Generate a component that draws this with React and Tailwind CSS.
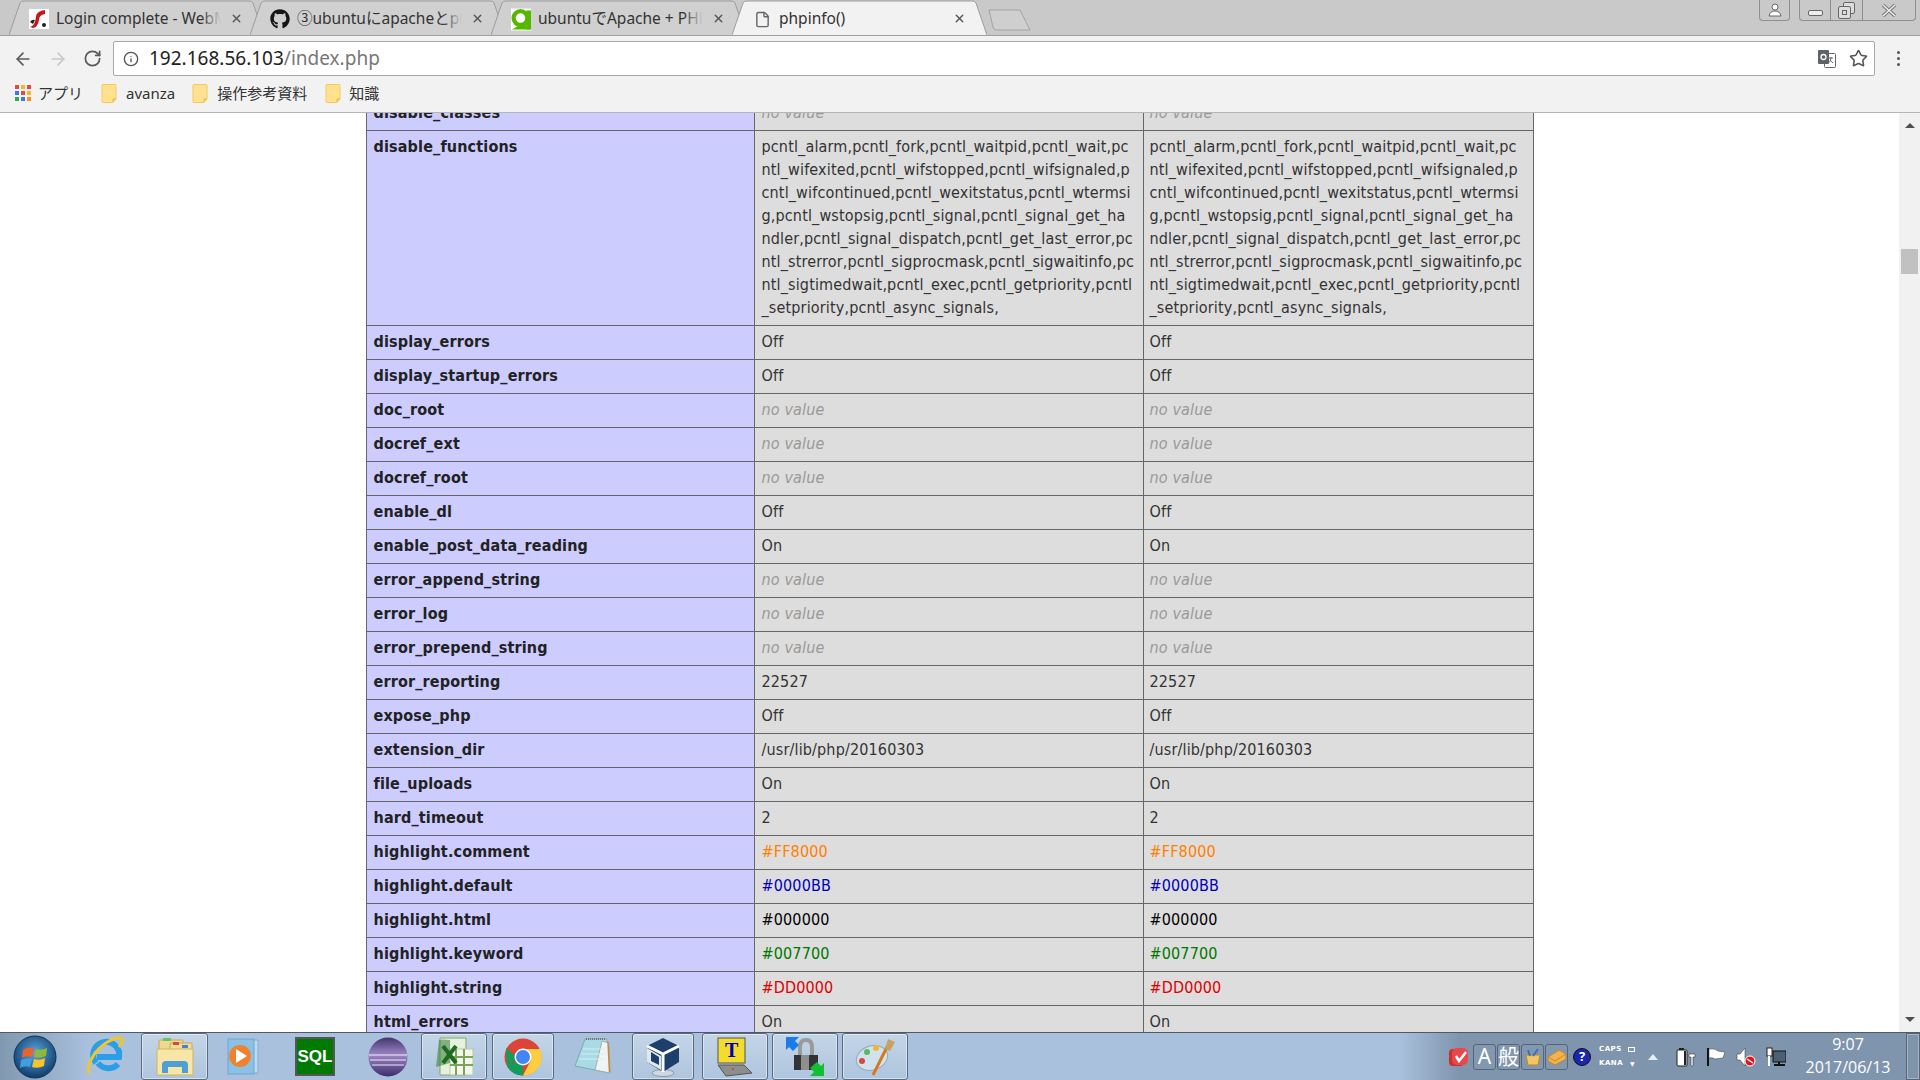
import React from 'react';
import { ArrowLeft, ArrowRight, RotateCw, Info, Star, X, File } from 'lucide-react';
import { FaGithub } from 'react-icons/fa';

const lines = [
  'pcntl_alarm,pcntl_fork,pcntl_waitpid,pcntl_wait,pc',
  'ntl_wifexited,pcntl_wifstopped,pcntl_wifsignaled,p',
  'cntl_wifcontinued,pcntl_wexitstatus,pcntl_wtermsi',
  'g,pcntl_wstopsig,pcntl_signal,pcntl_signal_get_ha',
  'ndler,pcntl_signal_dispatch,pcntl_get_last_error,pc',
  'ntl_strerror,pcntl_sigprocmask,pcntl_sigwaitinfo,pc',
  'ntl_sigtimedwait,pcntl_exec,pcntl_getpriority,pcntl',
  '_setpriority,pcntl_async_signals,',
];

const rows = [
  ['disable_classes', null],
  ['disable_functions', 'lines'],
  ['display_errors', 'Off'],
  ['display_startup_errors', 'Off'],
  ['doc_root', null],
  ['docref_ext', null],
  ['docref_root', null],
  ['enable_dl', 'Off'],
  ['enable_post_data_reading', 'On'],
  ['error_append_string', null],
  ['error_log', null],
  ['error_prepend_string', null],
  ['error_reporting', '22527'],
  ['expose_php', 'Off'],
  ['extension_dir', '/usr/lib/php/20160303'],
  ['file_uploads', 'On'],
  ['hard_timeout', '2'],
  ['highlight.comment', '#FF8000', 'text-[#FF8000]'],
  ['highlight.default', '#0000BB', 'text-[#0000BB]'],
  ['highlight.html', '#000000', 'text-[#000000]'],
  ['highlight.keyword', '#007700', 'text-[#007700]'],
  ['highlight.string', '#DD0000', 'text-[#DD0000]'],
  ['html_errors', 'On'],
];

const ValueCell = ({ row, px }) => {
  const [, value, color] = row;
  return (
    <td className={`border border-[#666] bg-[#ddd] pb-[6px] pt-[4px] pr-[4px] align-top ${px} ${color || 'text-[#333]'}`}>
      {value === null && <i className="text-[#999]">no value</i>}
      {value === 'lines' && lines.map((l) => <div key={l} className="whitespace-nowrap">{l}</div>)}
      {value !== null && value !== 'lines' && value}
    </td>
  );
};

const Tab = ({ active, title, icon, first }) => (
  <div className={`relative h-[35px] w-[255px] shrink-0 ${first ? '' : '-ml-[14px]'} ${active ? 'z-10' : ''}`}>
    <svg className="absolute inset-0" width="255" height="36" viewBox="0 0 255 36">
      <path
        d="M0 35 L11 3 Q12 1 15 1 L240 1 Q243 1 244 3 L255 35"
        fill={active ? '#f2f2f2' : '#d0d0d0'}
        stroke="#9c9c9c"
      />
    </svg>
    <div className="absolute left-[20px] top-[8px] flex h-[22px] items-center">
      <span className="flex w-[20px] justify-center">{icon}</span>
      <span className="relative ml-[7px] w-[165px] overflow-hidden whitespace-nowrap text-[15.5px] text-[#333]">
        {title}
        {!active && <span className="absolute inset-y-0 right-0 w-[20px] bg-gradient-to-r from-transparent to-[#d0d0d0]" />}
      </span>
    </div>
    <X className="absolute right-[21px] top-[12px] text-[#555]" size={13} strokeWidth={2.5} />
  </div>
);

const FolderMark = () => (
  <svg width="16" height="19" viewBox="0 0 16 19" className="shrink-0">
    <path d="M1 1.5 Q1 .5 2 .5 H14 Q15 .5 15 1.5 V15 L12 18.5 H2 Q1 18.5 1 17.5 Z" fill="#ffe18f" stroke="#f3c95e" />
    <path d="M12 18 V15 H15" fill="#f9d068" stroke="#e8b94c" />
  </svg>
);

const AppsGrid = () => {
  const colors = ['#e8483f', '#f7b52c', '#e8483f', '#3b78e7', '#e8483f', '#f7b52c', '#34a853', '#3b78e7', '#f7941d'];
  return (
    <div className="grid h-[16px] w-[16px] grid-cols-3 gap-[2px]">
      {colors.map((c, i) => (
        <span key={i} style={{ backgroundColor: c }} />
      ))}
    </div>
  );
};

const WebmIcon = () => (
  <svg width="20" height="20" viewBox="0 0 20 20">
    <rect width="20" height="20" fill="#fff" />
    <path d="M16 1 Q8 2 7 7 Q7 11 5 15 Q3 18 1 18 L4 19 Q9 18 10 11 Q10 6 16 5 Z" fill="#c8161d" />
    <path d="M1 13 Q3 10 6 11 L4 15 Z" fill="#222" />
    <circle cx="15" cy="16" r="2" fill="#222" />
  </svg>
);

const QiitaIcon = () => (
  <svg width="21" height="23" viewBox="0 0 21 23">
    <rect y="0" width="21" height="23" fill="#fff" />
    <circle cx="10" cy="10" r="9.5" fill="#55b800" />
    <circle cx="10" cy="10" r="5" fill="#fff" />
    <path d="M13 15 L20 22 H1" fill="#55b800" />
    <rect x="16" y="2" width="5" height="20" fill="#55b800" />
  </svg>
);

const WindowControls = () => (
  <div className="absolute right-[4px] top-0 flex items-start">
    <div className="mr-[9px] flex h-[21px] w-[31px] items-center justify-center rounded-b-[4px] border border-t-0 border-[#8f8f8f]">
      <svg width="14" height="14" viewBox="0 0 14 14">
        <circle cx="7" cy="4" r="3" fill="#fff" stroke="#666" />
        <path d="M1 13 Q2 8 7 8 Q12 8 13 13 Z" fill="#fff" stroke="#666" />
      </svg>
    </div>
    <div className="flex h-[21px] items-center rounded-b-[4px] border border-t-0 border-[#8f8f8f]">
      <div className="flex h-full w-[31px] items-center justify-center border-r border-[#8f8f8f]">
        <span className="mt-[5px] h-[6px] w-[15px] rounded-[2px] border border-[#666] bg-[#eee]" />
      </div>
      <div className="flex h-full w-[32px] items-center justify-center border-r border-[#8f8f8f]">
        <svg width="17" height="17" viewBox="0 0 17 17">
          <rect x="5.5" y=".5" width="11" height="11" rx="1.5" fill="#ddd" stroke="#666" />
          <rect x=".5" y="4.5" width="12" height="12" rx="1.5" fill="#ddd" stroke="#666" />
          <rect x="4.5" y="8.5" width="4" height="4" fill="none" stroke="#666" />
        </svg>
      </div>
      <div className="flex h-full w-[52px] items-center justify-center">
        <svg width="16" height="13" viewBox="0 0 16 13">
          <path d="M2 1 L14 12 M14 1 L2 12" stroke="#777" strokeWidth="3.5" />
          <path d="M2 1 L14 12 M14 1 L2 12" stroke="#eee" strokeWidth="1.5" />
        </svg>
      </div>
    </div>
  </div>
);

const TranslateIcon = () => (
  <svg width="18" height="18" viewBox="0 0 18 18">
    <rect x="6.5" y="3.5" width="11" height="14" rx="1" fill="#fff" stroke="#666" />
    <rect x="0" y="0" width="11" height="14" rx="1" fill="#5f6368" />
    <circle cx="5.5" cy="7" r="2.5" fill="none" stroke="#fff" strokeWidth="1.3" />
    <path d="M11 8 H15 M13 7 V8 Q13 12 10 13 M12 10 L15 13" stroke="#666" fill="none" />
  </svg>
);

const OrbIcon = () => (
  <svg width="44" height="44" viewBox="0 0 44 44">
    <defs>
      <radialGradient id="orb" cx="50%" cy="40%" r="60%">
        <stop offset="0%" stopColor="#5fa4d8" />
        <stop offset="100%" stopColor="#0d3c6e" />
      </radialGradient>
    </defs>
    <circle cx="22" cy="22" r="21" fill="url(#orb)" stroke="#16324f" />
    <path d="M10 15 Q15 11 21 14 L19 22 Q14 20 9 23 Z" fill="#e8642c" />
    <path d="M23 14 Q28 16 34 13 L33 21 Q27 24 21 22 Z" fill="#8cbb3c" />
    <path d="M8 25 Q14 22 19 24 L17 32 Q12 30 7 33 Z" fill="#3f9fe0" />
    <path d="M21 24 Q27 26 32 23 L31 31 Q25 34 19 32 Z" fill="#f7c42e" />
  </svg>
);

const IeIcon = () => (
  <svg width="38" height="44" viewBox="0 0 38 44">
    <path d="M9 28 A13 13 0 1 1 32 22 H10 M11 28 A13 13 0 0 0 31 29" fill="none" stroke="#2a9ee6" strokeWidth="6" />
    <path d="M3 38 Q-2 34 8 18 Q22 2 34 3 Q38 5 32 12" fill="none" stroke="#f0c62c" strokeWidth="3" />
  </svg>
);

const ExplorerIcon = () => (
  <svg width="40" height="40" viewBox="0 0 40 40">
    <rect x="4" y="3" width="24" height="14" rx="1" fill="#f0d98e" stroke="#c9a656" />
    <rect x="8" y="1" width="8" height="3" fill="#6ac26a" />
    <rect x="15" y="6" width="22" height="10" rx="1" fill="#f3dc95" stroke="#c9a656" />
    <rect x="18" y="5" width="6" height="3" fill="#d9483b" />
    <rect x="27" y="8" width="6" height="3" fill="#3b86d8" />
    <path d="M2 12 H38 V38 H2 Z" fill="#f7e6a6" stroke="#d3b264" />
    <path d="M7 36 V28 Q7 24 11 24 H29 Q33 24 33 28 V36 H27 V30 H13 V36 Z" fill="#4e9fd6" />
  </svg>
);

const WmpIcon = () => (
  <svg width="36" height="40" viewBox="0 0 36 40">
    <rect x="8" y="3" width="26" height="33" fill="#bcd9ef" stroke="#7fb0d6" />
    <rect x="4" y="2" width="26" height="35" fill="#8cc1e6" stroke="#6fa6cf" />
    <circle cx="16" cy="19" r="11" fill="#f0822d" />
    <path d="M12 12 L23 19 L12 26 Z" fill="#fff" />
  </svg>
);

const EclipseIcon = () => (
  <svg width="40" height="40" viewBox="0 0 40 40">
    <defs>
      <linearGradient id="ecl" x1="0" y1="0" x2="0" y2="1">
        <stop offset="0%" stopColor="#44366f" />
        <stop offset="45%" stopColor="#9c86c4" />
        <stop offset="100%" stopColor="#3d2c6b" />
      </linearGradient>
    </defs>
    <circle cx="20" cy="20" r="19.5" fill="url(#ecl)" />
    <path d="M1 18 H39 M2 23 H38 M4 28 H36" stroke="#efe9f7" strokeWidth="1.2" />
  </svg>
);

const ExcelIcon = () => (
  <svg width="40" height="40" viewBox="0 0 40 40">
    <path d="M6 1 H32 V38 H6 Z" fill="#e6f0dc" stroke="#7ea86b" />
    <rect x="16" y="12" width="23" height="26" fill="#f2f7ea" stroke="#b5c9a5" />
    <path d="M22 12 V38 M30 12 V38 M16 20 H39 M16 28 H39" stroke="#7ba35e" strokeWidth="2" />
    <path d="M5 3 Q8 2 16 3 V26 L2 30 Z" fill="#2f7d31" opacity=".55" />
    <path d="M9 9 L22 26 M22 9 L9 26" stroke="#1e6b22" strokeWidth="4" />
  </svg>
);

const ChromeIcon = () => (
  <svg width="38" height="38" viewBox="0 0 38 38">
    <circle cx="19" cy="19" r="18.5" fill="#db4437" />
    <path d="M19 19 L3 28 A18.5 18.5 0 0 0 19 37.5 Z" fill="#0f9d58" />
    <path d="M2 10 L3 28 L14 20 Z" fill="#0f9d58" />
    <path d="M19 11 H36 A18.5 18.5 0 0 1 19 37.5 L27 22 Z" fill="#ffcd40" />
    <circle cx="19" cy="19" r="8.5" fill="#fff" />
    <circle cx="19" cy="19" r="7" fill="#4285f4" />
  </svg>
);

const NotepadIcon = () => (
  <svg width="40" height="40" viewBox="0 0 40 40">
    <path d="M12 2 H34 L37 36 L2 29 Z" fill="#a8dbe6" stroke="#7fa9b2" />
    <path d="M29 4 L36 6 L37 36 L22 33 Z" fill="#eef4f4" stroke="#aaa" />
    <path d="M10 12 H31 M8 17 H31 M6 22 H30" stroke="#d6eef3" />
    <path d="M13 2 H32" stroke="#777" strokeWidth="2" strokeDasharray="1 1" />
    <path d="M35 5 L36.5 35" stroke="#c08a3a" strokeWidth="1.5" />
  </svg>
);

const VboxIcon = () => (
  <svg width="36" height="40" viewBox="0 0 36 40">
    <ellipse cx="18" cy="36" rx="11" ry="3.5" fill="#cfd8e0" stroke="#8d9aa6" />
    <path d="M18 1 L34 9 V25 L18 35 L2 25 V9 Z" fill="#1d3f6b" />
    <path d="M18 17 L34 9 M18 17 L2 9 M18 17 V35" stroke="#fff" strokeWidth="3" />
    <path d="M2 11 L16 19 V33 L2 25 Z" fill="#dfe7ef" />
    <path d="M6 15 L14 20 V28 L6 24 Z" fill="#1d3f6b" />
  </svg>
);

const TeraIcon = () => (
  <div className="relative h-[40px] w-[38px]">
    <svg className="absolute inset-0" width="38" height="40" viewBox="0 0 38 40">
      <rect x="2" y="1" width="27" height="25" fill="#f4dc2e" stroke="#555" />
      <path d="M2 28 H28 L36 36 L10 39 Z" fill="#8d8d8d" stroke="#555" />
      <circle cx="17" cy="32" r="1" fill="#d33" />
    </svg>
    <span className="absolute left-[9px] top-[3px] font-['Liberation_Serif',serif] text-[20px] font-bold leading-[20px] text-[#0000bb]">T</span>
  </div>
);

const LockIcon = () => (
  <svg width="40" height="40" viewBox="0 0 40 40">
    <path d="M15 19 V10 Q15 3 21 3 Q27 3 27 10 V19" fill="none" stroke="#9a9a9a" strokeWidth="4" />
    <rect x="9" y="18" width="24" height="15" fill="#333" />
    <rect x="16" y="18" width="8" height="15" fill="#8e8e8e" />
    <path d="M1 0 H14 L10 4 L14 8 L8 14 L4 10 L1 13 Z" fill="#1a7bea" />
    <path d="M39 39 H25 L29 35 L25 31 L32 25 L36 29 L39 26 Z" fill="#10c030" />
  </svg>
);

const PaintIcon = () => (
  <svg width="40" height="40" viewBox="0 0 40 40">
    <ellipse cx="17" cy="21" rx="16" ry="12" transform="rotate(-18 17 21)" fill="#cfe2ee" stroke="#92a9b8" />
    <circle cx="7" cy="24" r="3" fill="#d9483b" />
    <circle cx="12" cy="15" r="3" fill="#5cb85c" />
    <circle cx="21" cy="11" r="3" fill="#f2b632" />
    <path d="M18 38 L32 10" stroke="#d9761f" strokeWidth="3" />
    <path d="M30 12 L33 2 L40 5 L35 14 Z" fill="#c9a060" />
  </svg>
);

const TaskItem = ({ w, active, ml, children }) => (
  <div
    className={`flex h-[47px] shrink-0 items-center justify-center ${w} ${ml || ''} ${
      active ? 'rounded-[3px] border border-[#5a6b7f] bg-gradient-to-b from-[#c4d5e7] to-[#aec5de] shadow-[inset_0_0_0_1px_rgba(255,255,255,0.45)]' : ''
    }`}
  >
    {children}
  </div>
);

const LangBox = ({ children }) => (
  <div className="flex h-[26px] w-[23px] items-center justify-center rounded-[3px] border border-[#56667a] bg-[#8397af] text-[21px] leading-none text-white">
    {children}
  </div>
);

const Tray = () => (
  <div className="ml-auto flex h-full items-center">
    <svg width="20" height="20" viewBox="0 0 20 20" className="mr-[2px]">
      <rect x="0" y="2" width="15" height="17" rx="4" fill="#c9302f" />
      <rect x="3" y="1" width="16" height="17" rx="5" fill="#e8484a" />
      <path d="M7 9 L10 14 L17 5" fill="none" stroke="#fff" strokeWidth="2.5" />
    </svg>
    <div className="ml-[2px] flex gap-[1px]">
      <LangBox>A</LangBox>
      <LangBox>般</LangBox>
      <LangBox>
        <svg width="18" height="18" viewBox="0 0 18 18">
          <path d="M2 7 H16 L14 17 H4 Z" fill="#f2c661" stroke="#b98a2e" />
          <path d="M6 8 L4 2 M9 8 L14 1" stroke="#3b6fc4" strokeWidth="2" />
        </svg>
      </LangBox>
      <LangBox>
        <svg width="20" height="18" viewBox="0 0 20 18">
          <path d="M1 9 L12 2 L19 6 V11 L8 17 L1 13 Z" fill="#f2b24f" stroke="#b98a2e" />
          <path d="M1 9 L8 13 L19 6" fill="none" stroke="#c98a2e" />
        </svg>
      </LangBox>
    </div>
    <div className="ml-[5px] flex h-[18px] w-[18px] items-center justify-center rounded-full border border-[#111] bg-[#1a25b0] text-[13px] font-bold leading-none text-white">?</div>
    <div className="ml-[8px] flex w-[36px] flex-col gap-[1px] font-['DejaVu_Sans',sans-serif] text-[7px] font-bold leading-[13px] tracking-[0.5px] text-white">
      <div className="flex items-center justify-between"><span>CAPS</span><span className="h-[5px] w-[7px] border border-white" /></div>
      <div className="flex items-center justify-between"><span>KANA</span><span className="text-[6px] leading-none">▼</span></div>
    </div>
    <div className="ml-[13px] h-0 w-0 border-x-[5px] border-b-[6px] border-x-transparent border-b-[#e8edf2]" />
    <div className="ml-[18px] flex items-center gap-[10px]">
      <svg width="20" height="20" viewBox="0 0 20 20">
        <rect x="1" y="3" width="10" height="16" rx="1" fill="#fff" stroke="#222" />
        <rect x="3" y="1" width="5" height="2" fill="#222" />
        <rect x="8" y="4" width="2" height="14" fill="#222" />
        <path d="M13 7 H19 V10 H17 V19 H15 V10 H13 Z" fill="#fff" stroke="#222" strokeWidth=".5" />
      </svg>
      <svg width="20" height="20" viewBox="0 0 20 20">
        <path d="M2 1 V19" stroke="#111" strokeWidth="2" />
        <path d="M3 2 Q9 1 12 4 L19 5 L17 11 L9 12 Q6 10 3 11 Z" fill="#fff" stroke="#333" strokeWidth=".5" />
      </svg>
      <svg width="20" height="20" viewBox="0 0 20 20">
        <path d="M1 7 H4 L9 1 V19 L4 13 H1 Z" fill="#fff" stroke="#333" strokeWidth=".5" />
        <circle cx="14" cy="14" r="5" fill="#e1141c" stroke="#fff" />
        <path d="M11 12 L17 16" stroke="#fff" strokeWidth="1.5" />
      </svg>
      <svg width="20" height="20" viewBox="0 0 20 20">
        <rect x="1" y="1" width="5" height="8" fill="#fff" stroke="#222" />
        <path d="M3 9 V19" stroke="#fff" strokeWidth="2" />
        <rect x="7" y="4" width="13" height="11" fill="#4d5f73" stroke="#111" />
        <path d="M8 18 H19 M13 15 V18" stroke="#111" strokeWidth="2" />
      </svg>
    </div>
    <div className="ml-[16px] w-[92px] -translate-y-[1px] text-center font-['Open_Sans',sans-serif] text-[16px] leading-[23px] text-white">
      <div>9:07</div>
      <div>2017/06/13</div>
    </div>
    <div className="ml-[12px] h-full w-[14px] border border-[#566577] bg-[#7f93ab] shadow-[inset_0_0_0_1px_rgba(255,255,255,0.3)]" />
  </div>
);

export default function App() {
  return (
    <div className="flex h-screen w-[1920px] flex-col overflow-hidden bg-white font-['Noto_Sans','Noto_Sans_CJK_JP',sans-serif]">
      {/* chrome */}
      <header className="shrink-0">
        <div className="relative flex h-[36px] items-start border-b border-[#a0a0a0] bg-[#c9c9c9] pl-[9px]">
          <Tab first title="Login complete - WebM" icon={<WebmIcon />} />
          <Tab title="③ubuntuにapacheとph" icon={<FaGithub size={20} className="text-[#161616]" />} />
          <Tab title="ubuntuでApache + PHP" icon={<QiitaIcon />} />
          <Tab active title="phpinfo()" icon={<File size={17} className="text-[#666]" />} />
          <svg className="ml-[1px] mt-[9px]" width="44" height="22" viewBox="0 0 44 22">
            <path d="M1 1 H32 L42 21 H8 Q6 21 5 18 Z" fill="#cfcfcf" stroke="#a3a3a3" />
          </svg>
          <WindowControls />
        </div>
        <div className="flex h-[40px] items-center bg-[#f2f2f2] pt-[5px]">
          <ArrowLeft className="ml-[13px] text-[#5a5a5a]" size={20} strokeWidth={2} />
          <ArrowRight className="ml-[15px] text-[#c8c8c8]" size={20} strokeWidth={2} />
          <RotateCw className="ml-[15px] text-[#5a5a5a]" size={19} strokeWidth={2.2} />
          <div className="ml-[11px] flex h-[35px] w-[1762px] items-center rounded-[2px] border border-[#a9a9a9] bg-white">
            <Info className="ml-[9px] text-[#555]" size={16} strokeWidth={2} />
            <span className="ml-[10px] text-[19px] text-[#222]">
              192.168.56.103<span className="text-[#777]">/index.php</span>
            </span>
            <div className="ml-auto mr-[6px] flex items-center gap-[13px]">
              <TranslateIcon />
              <Star className="text-[#555]" size={19} strokeWidth={2} />
            </div>
          </div>
          <div className="ml-[22px] flex flex-col gap-[3px]">
            <span className="h-[3px] w-[3px] rounded-full bg-[#555]" />
            <span className="h-[3px] w-[3px] rounded-full bg-[#555]" />
            <span className="h-[3px] w-[3px] rounded-full bg-[#555]" />
          </div>
        </div>
        <div className="flex h-[37px] items-center border-b border-[#b5b5b5] bg-[#f2f2f2] pb-[2px] pl-[15px] text-[15px] text-[#333]">
          <AppsGrid />
          <span className="ml-[7px]">アプリ</span>
          <span className="ml-[18px]"><FolderMark /></span>
          <span className="ml-[9px]">avanza</span>
          <span className="ml-[17px]"><FolderMark /></span>
          <span className="ml-[9px]">操作参考資料</span>
          <span className="ml-[18px]"><FolderMark /></span>
          <span className="ml-[8px]">知識</span>
        </div>
      </header>

      {/* page */}
      <main className="flex min-h-0 flex-1 overflow-hidden">
        <div className="min-w-0 flex-1 overflow-hidden">
          <table className="mx-auto -mt-[17px] w-[1167px] table-fixed border-collapse font-['DejaVu_Sans_Condensed','DejaVu_Sans',sans-serif] text-[16px] leading-[23px] tracking-[0.15px] text-[#222]">
            <colgroup>
              <col className="w-[388px]" />
              <col className="w-[389px]" />
              <col className="w-[390px]" />
            </colgroup>
            <tbody>
              {rows.map((row) => (
                <tr key={row[0]}>
                  <td className="border border-[#666] bg-[#ccf] pb-[6px] pl-[7px] pr-[6px] pt-[4px] align-top font-bold">{row[0]}</td>
                  <ValueCell row={row} px="pl-[7px]" />
                  <ValueCell row={row} px="pl-[6px]" />
                </tr>
              ))}
            </tbody>
          </table>
        </div>
        <aside className="flex w-[21px] shrink-0 flex-col items-center bg-[#f1f1f1]">
          <span className="mt-[10px] h-0 w-0 border-x-[5px] border-b-[5px] border-x-transparent border-b-[#505050]" />
          <span className="mt-[121px] h-[25px] w-[17px] bg-[#c1c1c1]" />
          <span className="mb-[10px] mt-auto h-0 w-0 border-x-[5px] border-t-[5px] border-x-transparent border-t-[#505050]" />
        </aside>
      </main>

      {/* taskbar */}
      <footer className="flex h-[48px] shrink-0 items-center border-t border-[#4f5a66] bg-[linear-gradient(to_right,#8098b0_0,#a9c1dc_90px,#a9c1dc_1400px,#7f94ad_1460px)]">
        <TaskItem w="w-[70px]"><OrbIcon /></TaskItem>
        <TaskItem w="w-[71px]"><IeIcon /></TaskItem>
        <TaskItem w="w-[67px]" active><ExplorerIcon /></TaskItem>
        <TaskItem w="w-[67px]"><WmpIcon /></TaskItem>
        <TaskItem w="w-[80px]">
          <div className="flex h-[39px] w-[40px] items-center justify-center border-2 border-[#555] bg-[#007a00] font-['Liberation_Sans',sans-serif] text-[17px] font-bold text-white">SQL</div>
        </TaskItem>
        <TaskItem w="w-[66px]"><EclipseIcon /></TaskItem>
        <TaskItem w="w-[66px]" active><ExcelIcon /></TaskItem>
        <TaskItem w="w-[62px]" ml="ml-[5px]" active><ChromeIcon /></TaskItem>
        <TaskItem w="w-[78px]"><NotepadIcon /></TaskItem>
        <TaskItem w="w-[62px]" active><VboxIcon /></TaskItem>
        <TaskItem w="w-[66px]" ml="ml-[8px]" active><TeraIcon /></TaskItem>
        <TaskItem w="w-[66px]" ml="ml-[4px]" active><LockIcon /></TaskItem>
        <TaskItem w="w-[66px]" ml="ml-[4px]" active><PaintIcon /></TaskItem>
        <Tray />
      </footer>
    </div>
  );
}
